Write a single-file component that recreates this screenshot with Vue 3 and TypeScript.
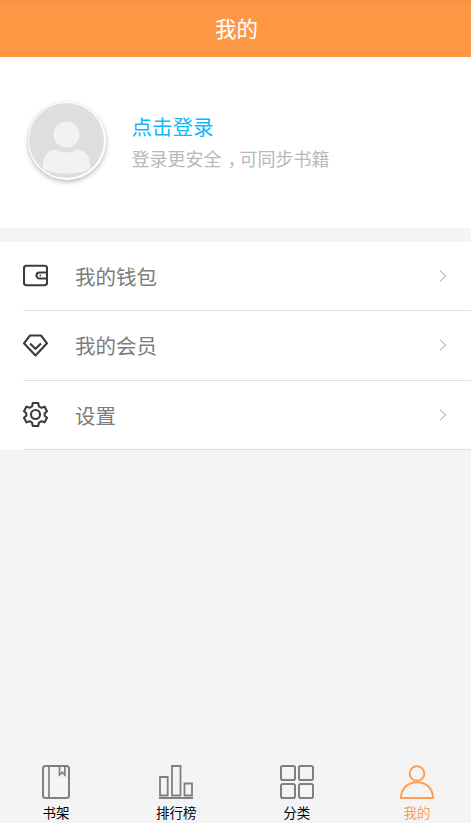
<script setup lang="ts">
import { ref } from 'vue'

type RowIcon = 'wallet' | 'member' | 'settings'
type TabIcon = 'shelf' | 'rank' | 'category' | 'mine'

const rows: { icon: RowIcon; label: string }[] = [
  { icon: 'wallet', label: '我的钱包' },
  { icon: 'member', label: '我的会员' },
  { icon: 'settings', label: '设置' },
]

const tabs: { icon: TabIcon; label: string }[] = [
  { icon: 'shelf', label: '书架' },
  { icon: 'rank', label: '排行榜' },
  { icon: 'category', label: '分类' },
  { icon: 'mine', label: '我的' },
]

const active = ref<TabIcon>('mine')
</script>

<template>
  <div class="page">
    <header class="header"><h1>我的</h1></header>

    <section class="profile">
      <div class="avatar">
        <svg viewBox="0 0 76 76">
          <circle cx="38" cy="38" r="38" fill="#dedede" />
          <circle cx="38" cy="32" r="13.2" fill="#f2f2f2" />
          <path d="M14 66.500C13.500 56 17.500 48.500 26 47.200Q38 53 50 47.200C58.500 48.500 62.500 56 62 66.500Q51 71.500 38 71.500T14 66.500Z" fill="#f2f2f2" />
        </svg>
      </div>
      <div class="intro">
        <div class="login">点击登录</div>
        <div class="hint">登录更安全<span class="comma">，</span>可同步书籍</div>
      </div>
    </section>

    <ul class="list">
      <li v-for="row in rows" :key="row.icon" class="row">
        <div class="row-body">
          <svg class="row-icon" viewBox="0 0 25 25" fill="none" stroke="#3c3c3c" stroke-width="2.1">
            <template v-if="row.icon === 'wallet'">
              <rect x="1" y="2.800" width="23" height="19.400" rx="2.500" />
              <path d="M24 9.500H16.500a3 3 0 0 0 0 6H24" />
              <circle cx="17.300" cy="12.500" r="0.900" fill="#3c3c3c" stroke="none" />
            </template>
            <template v-else-if="row.icon === 'member'">
              <path d="M7 2.500H18L24 10.300 12.500 22.500 1 10.300Z" stroke-linejoin="round" />
              <path d="M7 10.500L12.500 15.800 18 10.500" />
            </template>
            <template v-else>
              <path d="M9.800 1H15.200L15.900 4.300 18.500 5.800 21.500 4.600 24 9.200 21.700 11.200V13.800L24 15.800 21.500 20.400 18.500 19.200 15.900 20.700 15.200 24H9.800L9.100 20.700 6.500 19.200 3.500 20.400 1 15.800 3.300 13.800V11.200L1 9.200 3.500 4.600 6.500 5.800 9.100 4.300Z" stroke-linejoin="round" />
              <circle cx="12.500" cy="12.500" r="4.500" />
            </template>
          </svg>
          <span class="row-label">{{ row.label }}</span>
          <svg class="chevron" viewBox="0 0 8 12" fill="none" stroke="#999" stroke-width="1">
            <path d="M1 0.700L6.500 6 1 11.300" />
          </svg>
        </div>
      </li>
    </ul>

    <nav class="tabs">
      <button
        v-for="tab in tabs"
        :key="tab.icon"
        class="tab"
        :class="{ active: active === tab.icon }"
        @click="active = tab.icon"
      >
        <svg class="tab-icon" viewBox="0 0 34 34" fill="none" stroke="currentColor" stroke-width="2">
          <template v-if="tab.icon === 'shelf'">
            <rect x="4" y="1" width="26" height="32" rx="2.500" />
            <path d="M10 1V33M20.500 1V10L23.200 7.200 25.900 10V1" stroke-width="1.7" />
          </template>
          <template v-else-if="tab.icon === 'rank'">
            <path d="M1 12H8.700V30.500H1ZM13 1H21.500V30.500H13ZM25.500 18.500H33V30.500H25.500ZM0 33H34" stroke-width="1.8" />
          </template>
          <template v-else-if="tab.icon === 'category'">
            <rect x="1" y="1" width="14" height="14" rx="1.800" />
            <rect x="19" y="1" width="14" height="14" rx="1.800" />
            <rect x="1" y="19" width="14" height="14" rx="1.800" />
            <rect x="19" y="19" width="14" height="14" rx="1.800" />
          </template>
          <template v-else>
            <circle cx="17" cy="8.500" r="7.300" />
            <path d="M1 33C1 23.500 8 17.300 17 17.300S33 23.500 33 33Z" />
          </template>
        </svg>
        <span>{{ tab.label }}</span>
      </button>
    </nav>
  </div>
</template>

<style>
body {
  margin: 0;
  background: #f4f4f4;
}
</style>

<style scoped>
.page {
  display: flex;
  flex-direction: column;
  height: 823px;
  background: #f4f4f4;
  font-family: "Noto Sans CJK SC", sans-serif;
}

.header {
  display: flex;
  align-items: center;
  justify-content: center;
  height: 57.400px;
  background: linear-gradient(#f29144, #ff9845 6px);
}

h1 {
  margin: 0 0 2px 2px;
  color: #fff;
  font-size: 21.500px;
  font-weight: 400;
  line-height: 30px;
}

.profile {
  display: flex;
  gap: 26px;
  box-sizing: border-box;
  height: 171.100px;
  padding: 44px 0 0 27.500px;
  background: #fff;
}

.avatar {
  box-sizing: border-box;
  width: 78px;
  height: 78px;
  margin-top: 0.600px;
  padding: 1.500px;
  border-radius: 50%;
  background: #fff;
  box-shadow: 0 2px 5px rgba(0, 0, 0, 0.28);
}

.avatar svg {
  display: block;
  width: 75px;
  height: 75px;
}

.intro {
  padding-top: 10px;
}

.login {
  color: #10b7fa;
  font-size: 20.500px;
  line-height: 31px;
}

.hint {
  padding-top: 1px;
  color: #b8b8b8;
  font-size: 18px;
  line-height: 30px;
}

.comma {
  padding: 0 3px 0 6px;
  font-feature-settings: "halt";
}

.list {
  margin: 13.300px 0 0;
  padding: 0;
  background: #fff;
  list-style: none;
}

.row {
  padding-left: 23px;
}

.row-body {
  display: flex;
  align-items: center;
  box-sizing: border-box;
  height: 69.400px;
  padding-right: 24.500px;
  border-bottom: 1px solid #e0e0e0;
}

.row-icon {
  width: 25px;
  height: 25px;
}

.row-label {
  flex: 1;
  padding-left: 27px;
  color: #7c7c7c;
  font-size: 20.500px;
  line-height: 30px;
}

.chevron {
  width: 8px;
  height: 12px;
}

.tabs {
  display: flex;
  justify-content: space-between;
  height: 58px;
  margin-top: auto;
  padding: 0 14px 0 16px;
}

.tab {
  display: flex;
  flex-direction: column;
  align-items: center;
  width: 80px;
  padding: 0;
  border: 0;
  background: none;
  color: #808080;
  font: 13.500px/20px "Noto Sans CJK SC", sans-serif;
}

.tab-icon {
  width: 34px;
  height: 34px;
  margin-bottom: 3px;
}

.tab span {
  color: #000;
}

.tab.active,
.tab.active span {
  color: #ff9d50;
}
</style>
